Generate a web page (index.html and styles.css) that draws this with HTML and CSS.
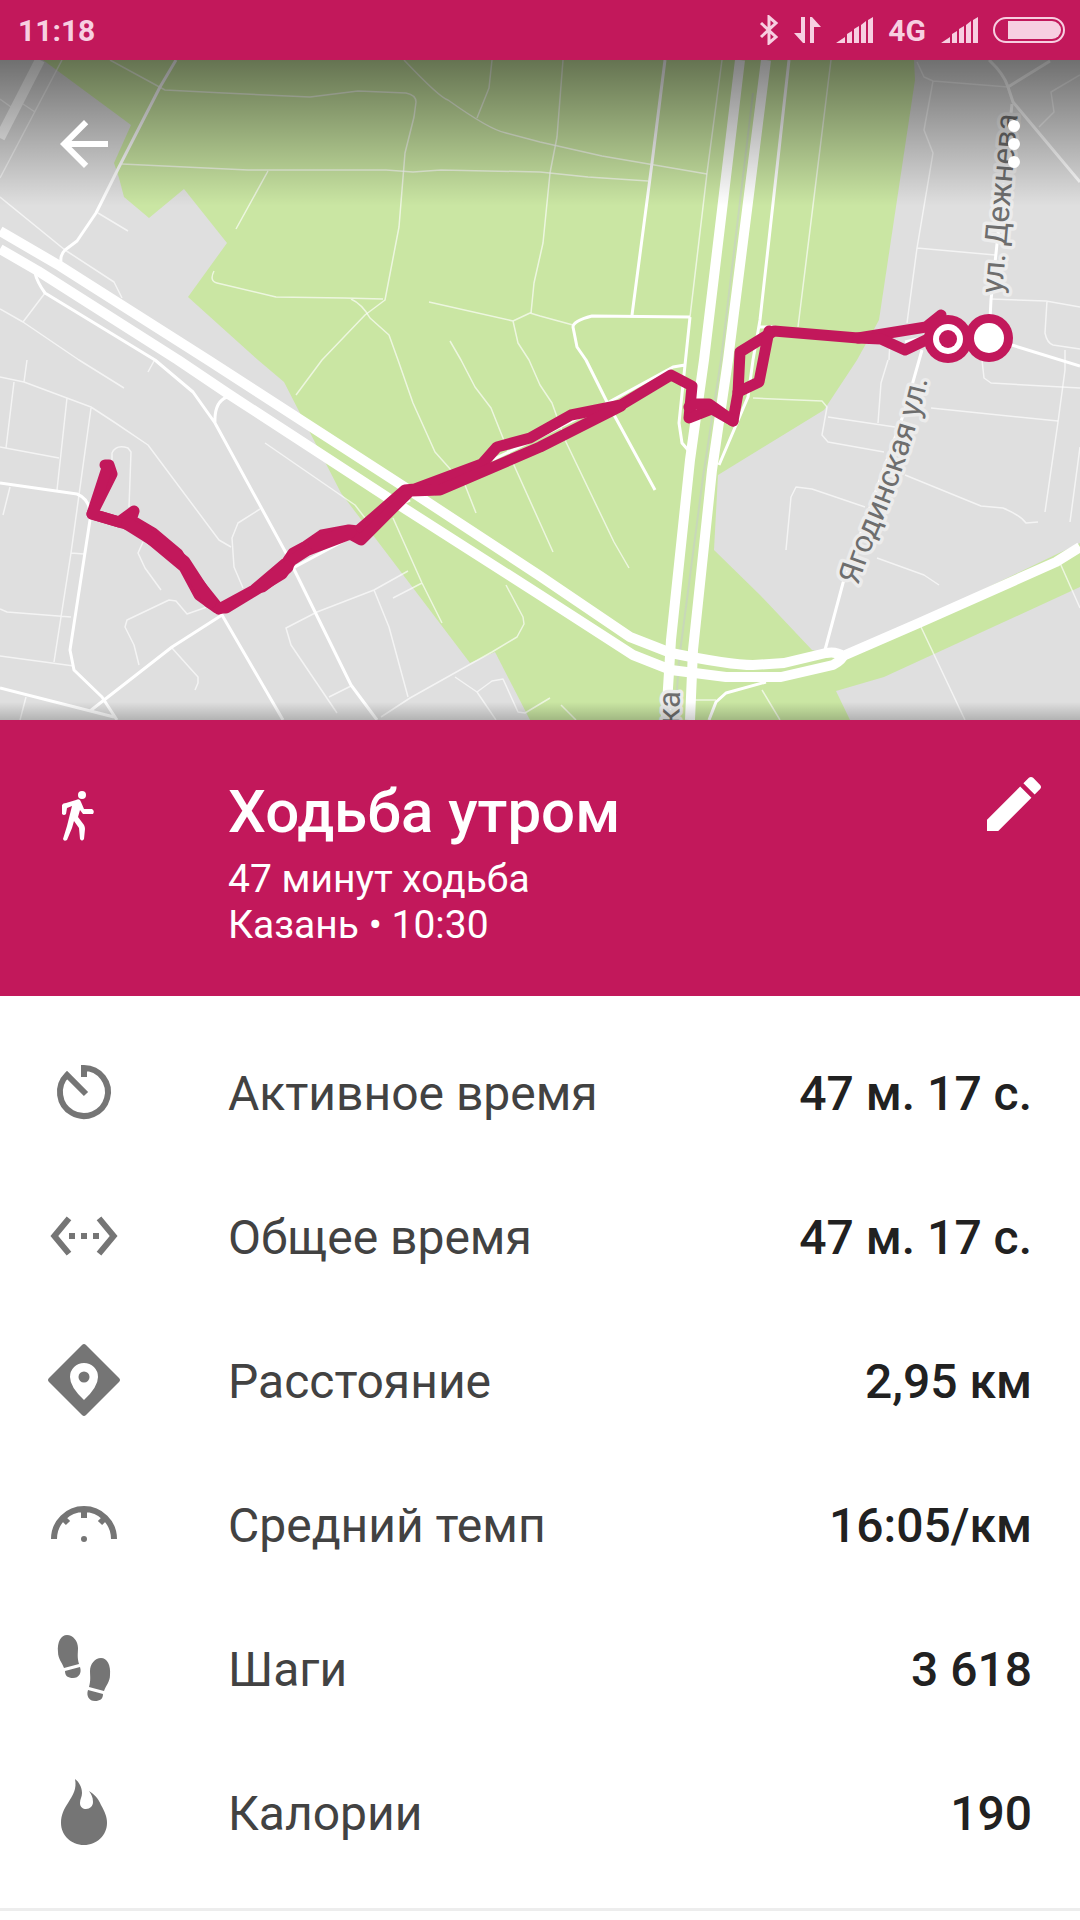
FILE: index.html
```html
<!DOCTYPE html>
<html lang="ru">
<head>
	<meta charset="UTF-8">
	<meta name="viewport" content="width=device-width, initial-scale=1">
	<title>Ходьба утром</title>
	<link rel="stylesheet" href="styles.css">
</head>
<body>
	<div class="status">
		<span class="status-text">11:18</span>
		<div class="status-icons">
			<svg width="20" height="30" viewBox="0 0 20 30"><path d="M2 8l15 14-7 6V2l7 6L2 22" fill="none" stroke="currentColor" stroke-width="3"/></svg>
			<svg width="27" height="26" viewBox="0 0 27 26"><path d="M7 0h4v26H9L0 16h7zM16 26h4V10h7L18 0h-2z" fill="currentColor"/></svg>
			<svg width="37" height="26" viewBox="0 0 37 26"><path d="M0 26l9-6v6zM11 26v-9l5-3v12zM18 26V12l5-3v17zM25 26V8l5-4v22zM32 26V3l5-3v26z" fill="currentColor"/></svg>
			<span class="status-text">4G</span>
			<svg width="37" height="26" viewBox="0 0 37 26"><path d="M0 26l9-6v6zM11 26v-9l5-3v12zM18 26V12l5-3v17zM25 26V8l5-4v22zM32 26V3l5-3v26z" fill="currentColor"/></svg>
			<svg width="72" height="26" viewBox="0 0 72 26"><rect x="1" y="1" width="70" height="24" rx="12" fill="none" stroke="currentColor" stroke-width="2"/><path d="M15 4h44a9 9 0 0 1 0 18H15z" fill="currentColor"/></svg>
		</div>
	</div>

	<div class="map">
		<svg class="map-canvas" viewBox="0 60 1080 660">
			<defs>
				<linearGradient id="shade" x1="0" y1="0" x2="0" y2="1">
					<stop offset="0" stop-opacity=".5"/>
					<stop offset="1" stop-opacity="0"/>
				</linearGradient>
				<linearGradient id="shadeBottom" x1="0" y1="0" x2="0" y2="1">
					<stop offset="0" stop-opacity="0"/>
					<stop offset="1" stop-opacity=".2"/>
				</linearGradient>
				<path id="yagodinskaya" d="M858 586Q868 556 877 534Q900 480 911 443Q921 412 930 370"/>
			</defs>
			<rect class="land" y="60" width="1080" height="660"/>
			<path class="park" d="M43 60L131 125L114 163L119 178L124 197L149 218L184 189L227 243L188 297L258 360L284 382L341 493L470 663L495 652L530 720H850L836 691L884 677L1080 587V543L843 657L812 650L760 595L714 550L718 475L824 410L857 360L879 320L915 80L914 60Z"/>

			<!-- lanes -->
			<g class="lane">
				<path d="M62 60L0 178M0 99L11 107M23 104L35 112"/>
				<path d="M110 60L165 90L224 93L310 97L358 91L406 93Q416 95 416 102L414 117L405 153L399 227L385 300L365 315L322 360L296 395"/>
				<path d="M122 164L248 170H386L413 172L441 170L540 172L588 177L648 181M268 171L236 229"/>
				<path d="M404 60Q440 98 448 100Q490 130 506 133L540 142L602 156L707 174M492 60L489 88L477 118"/>
				<path d="M214 271Q209 281 217 283L276 297L344 298L383 299M351 299Q362 304 370 318L389 335L398 360L413 403L435 452L451 470L465 485L476 513"/>
				<path d="M429 302L513 321L530 313L540 316L573 325M513 321L518 343L529 360L540 385L552 403L566 442L614 542L629 568"/>
				<path d="M450 341L461 360L475 387L491 408L513 463L540 523L553 552M563 60L557 137L550 173L543 243L534 283L531 313"/>
				<path d="M0 197L65 250L114 282L122 298M98 213L128 231M45 293L23 322L0 309M23 322L79 360L124 388"/>
				<path d="M0 377L24 382L91 407L114 422L148 445L219 540L231 547M27 360L24 382M14 382L6 448M67 398L57 490M0 447L59 458"/>
				<path d="M91 408L71 553L54 662M0 609L7 612L71 617M0 656L74 666M71 553L84 554M10 487L3 515M26 697L20 720"/>
				<path d="M112 463V453Q116 444 128 448L131 452L129 507M143 542L138 553L145 568L161 590"/>
				<path d="M207 607L187 614L176 601L169 600L127 620L125 627L134 645L139 665M172 648L198 677V683L195 690"/>
				<path d="M260 509L238 523L232 538L234 567L243 588M154 361L148 372M265 443L355 505L365 518"/>
				<path d="M408 571L374 590L317 612L286 628L291 645L337 713M374 590L389 627L408 697M329 697L351 686"/>
				<path d="M393 518L422 583L442 623M422 583L393 598M381 717L410 698L492 652L517 637L524 624L523 617L506 585"/>
				<path d="M455 677L477 692L496 720M477 692L492 681L503 679L518 712L525 713L550 698M561 705L576 720"/>
				<path d="M722 60L707 173L690 317M831 60L798 327M753 398L822 401L827 407L822 435L828 442L884 452"/>
				<path d="M917 62L924 77L933 81L1008 87M933 81L924 130L933 153L917 248L907 323M917 248L995 255"/>
				<path d="M1080 75L1051 92L1054 112L1039 127M991 299L1046 301L1080 307M1047 301L1045 333Q1047 343 1053 345L1080 349M1065 350V370L1058 422L1045 512"/>
				<path d="M982 360L984 378L991 383L1080 388M888 360L881 383L878 423M828 417L895 427M931 408L1058 421M889 360L890 340"/>
				<path d="M905 475L981 506L1003 508Q1020 515 1026 523L1038 522M865 507L812 489L796 487L791 497L786 550M877 558L924 575L939 585"/>
				<path d="M1080 447L1070 522M1060 563L1080 608M921 627L965 720M762 690L780 720M695 700H716"/>
			</g>

			<!-- streets -->
			<g class="street">
				<path d="M176 60L160 87L119 167L96 213L77 241L65 250Q60 255 61 262"/>
				<path d="M35 273Q37 282 45 293L155 360L193 392L215 423L286 553L351 685L377 720M227 397Q214 402 215 423"/>
				<path d="M0 483L77 494Q92 500 90 520L70 650L74 670L102 697L117 720M0 688L114 717M90 711L172 647L222 615L283 720M293 568L351 537"/>
				<path d="M665 60L652 163L632 315M690 317L592 316Q573 321 573 327L577 347L586 360L607 402L655 490"/>
				<path d="M690 317L685 365L679 423L682 443L688 450M685 365L673 367L609 402L574 420L540 437L492 460M405 492L435 494M394 508L410 500"/>
				<path d="M789 60L760 320L753 360L748 397L719 465M989 60Q1004 74 1008 87L1013 102L1080 182M1008 87L1050 61M760 327H775"/>
				<path d="M1012 104L991 300L989 338L1080 366M922 350L905 410L843 583L825 650M766 682L726 693L716 702L709 720M905 342L930 336"/>
			</g>

			<!-- highways -->
			<path class="railway" d="M753 93L721 360L703 477L679 660L677 690"/>
			<g class="highway">
				<path d="M40 60L0 138"/>
				<path d="M740 60L704 360L690 460L671 640L666 720M766 60L728 360L712 470L693 650L690 720"/>
				<path d="M0 231L60 266L208 360L406 488L540 576L630 637L671 653Q730 665 753 665L784 663L826 653Q836 651 843 656L919 623L1056 562L1080 547"/>
				<path d="M0 249L38 271L178 360L227 393L396 503L540 595L633 655L671 670L726 677H781L833 665Q842 660 843 656"/>
			</g>

			<g class="map-label">
				<text transform="translate(1002 294) rotate(-85)">ул. Дежнева</text>
				<text><textPath href="#yagodinskaya">Ягодинская ул.</textPath></text>
				<text transform="translate(679 725) rotate(-88)">ка</text>
			</g>

			<!-- walked route, there and back -->
			<g class="route">
				<path d="M105 465L109 465L112 474L92 514L119 522L134 511L131 520L153 533L178 554L187 569L219 609L254 590L287 562L293 553L306 546L322 535L349 530L358 531L405 490L415 489L482 464L497 447L530 438L571 415L621 405L671 375L692 386L689 418L712 409L733 421L738 393L740 352L774 331L858 338L926 327L941 315"/>
				<path d="M107 468L92 514L119 522L136 527L184 567L199 595L217 608L226 608L282 574L291 561L308 550L350 534L361 540L410 491L440 490L540 447L621 406M689 407L695 404L709 404L733 421M738 392L759 382L769 331M858 338L881 339L905 350L926 340L948 327"/>
				<path class="route-core" d="M128 524L168 549L184 562L210 602M262 586L287 567M315 544L350 532"/>
			</g>
			<circle class="pin" cx="948" cy="339" r="24"/>
			<circle class="pin" cx="989" cy="338" r="24"/>
			<circle class="pin-inner" cx="948" cy="339" r="15"/>
			<circle class="pin" cx="948" cy="339" r="9"/>
			<circle class="pin-inner" cx="989" cy="338" r="15"/>

			<rect y="60" width="1080" height="146" fill="url(#shade)"/>
			<rect y="702" width="1080" height="18" fill="url(#shadeBottom)"/>
		</svg>
		<div class="toolbar">
			<button class="icon-btn" type="button" aria-label="Назад">
				<svg class="icon" viewBox="0 0 24 24"><path d="M20 11H7.83l5.59-5.59L12 4l-8 8 8 8 1.41-1.41L7.83 13H20v-2z"/></svg>
			</button>
			<button class="icon-btn" type="button" aria-label="Ещё">
				<svg class="icon" viewBox="0 0 24 24"><circle cx="12" cy="6" r="2"/><circle cx="12" cy="12" r="2"/><circle cx="12" cy="18" r="2"/></svg>
			</button>
		</div>
	</div>

	<header class="summary">
		<svg class="walker" viewBox="0 0 32 50">
			<circle cx="20" cy="4" r="4"/>
			<path d="M14 9Q18 7 19 11L22 18 30 18Q33 20 31 23L21 23 18 19 16 26 22 34Q23 36 23 38L22 48Q20 51 18 48L17 37 12 30 10 37 5 49Q2 51 1 48L5 35 10 15 5 17 4 23Q2 25 0 23L0 14Q1 12 4 12Z"/>
		</svg>
		<div class="summary-text">
			<h1>Ходьба утром</h1>
			<p>47 минут ходьба</p>
			<p>Казань • 10:30</p>
		</div>
		<button class="icon-btn" type="button" aria-label="Изменить">
			<svg class="icon" viewBox="0 0 24 24"><path d="M3 17.25V21h3.75L17.81 9.94l-3.75-3.75L3 17.25zM20.71 7.04c.39-.39.39-1.02 0-1.41l-2.34-2.34c-.39-.39-1.02-.39-1.41 0l-1.83 1.83 3.75 3.75 1.83-1.83z"/></svg>
		</button>
	</header>

	<dl class="stats">
		<div class="stat">
			<dt>
				<svg class="icon" viewBox="0 0 72 72"><path class="line" d="M36 21V12a24 24 0 1 1-17 7l19 19"/></svg>
				<span class="stat-text">Активное время</span>
			</dt>
			<dd class="stat-text">47 м. 17 с.</dd>
		</div>
		<div class="stat">
			<dt>
				<svg class="icon" viewBox="0 0 24 24"><path d="M7.77 6.76L6.23 5.48.82 12l5.41 6.52 1.54-1.28L3.42 12l4.35-5.24zM7 13h2v-2H7v2zm10-2h-2v2h2v-2zm-6 2h2v-2h-2v2zm6.77-7.52l-1.54 1.28L20.58 12l-4.35 5.24 1.54 1.28L23.18 12l-5.41-6.52z"/></svg>
				<span class="stat-text">Общее время</span>
			</dt>
			<dd class="stat-text">47 м. 17 с.</dd>
		</div>
		<div class="stat">
			<dt>
				<svg class="icon" viewBox="0 0 72 72"><path fill-rule="evenodd" d="M34 1q2-2 4 0l33 33q2 2 0 4L38 71q-2 2-4 0L1 38q-2-2 0-4zM36 19a14 14 0 0 0-14 14q0 10 14 23 14-13 14-23a14 14 0 0 0-14-14z"/><circle cx="36" cy="33" r="5.5"/></svg>
				<span class="stat-text">Расстояние</span>
			</dt>
			<dd class="stat-text">2,95 км</dd>
		</div>
		<div class="stat">
			<dt>
				<svg class="icon" viewBox="0 0 72 72"><path class="line" d="M6 51a30 30 0 0 1 60 0M36 20v10M14 29l6 6M58 29l-6 6"/><circle cx="36" cy="51" r="3"/></svg>
				<span class="stat-text">Средний темп</span>
			</dt>
			<dd class="stat-text">16:05/км</dd>
		</div>
		<div class="stat">
			<dt>
				<svg class="icon" viewBox="0 0 72 72">
					<path d="M19 3C13 3 9 10 10 20C10 27 14 30 16 36L31 32C29 25 30 21 30 16C30 9 25 3 19 3ZM17 39L32 35C34 41 31 46 25 46C20 46 17 44 17 39Z"/>
					<path d="M53 26C59 26 63 33 62 43C62 50 58 53 56 59L41 55C43 48 42 44 42 39C42 32 47 26 53 26ZM55 62L40 58C38 64 41 69 47 69C52 69 55 67 55 62Z"/>
				</svg>
				<span class="stat-text">Шаги</span>
			</dt>
			<dd class="stat-text">3 618</dd>
		</div>
		<div class="stat">
			<dt>
				<svg class="icon" viewBox="0 0 72 72"><path d="M27 3C31 6 34 11 34 17C34 21 32 23 32 27C32 31 35 33 38 33C42 33 45 30 45 26C45 21 43 18 41 15C46 18 50 22 53 29C57 36 59 41 59 47C59 59 49 69 36 69C23 69 13 59 13 47C13 39 16 33 20 27C25 19 29 13 27 3Z"/></svg>
				<span class="stat-text">Калории</span>
			</dt>
			<dd class="stat-text">190</dd>
		</div>
	</dl>
</body>
</html>
```

FILE: styles.css
```css
* {
	box-sizing: border-box;
}
html,body {
	margin: 0;
	padding: 0;
	font-family: Roboto, "Noto Sans", sans-serif;
	background: #fff;
	color: #212121;
}
svg {
	display: block;
}

.status {
	display: flex;
	justify-content: space-between;
	align-items: center;
	height: 60px;
	padding: 0 15px 0 18px;
	background: #c2185b;
	color: #f7cfe1;
}
.status-text {
	padding-top: 2px;
	font-size: 30px;
	line-height: 36px;
	font-weight: 700;
}
.status-icons {
	display: flex;
	align-items: center;
	gap: 15px;
}

/* map */
.map {
	position: relative;
}
.map-canvas {
	width: 100%;
	height: auto;
}
.land { fill: #dfdfdf; }
.park { fill: #cae6a3; }
.lane,
.street,
.highway,
.railway,
.route {
	fill: none;
	stroke: #fff;
	stroke-linejoin: round;
}
.lane {
	stroke-width: 1.5;
	stroke-opacity: .65;
}
.street { stroke-width: 3; }
.highway { stroke-width: 10; }
.railway {
	stroke: #c8d8b8;
	stroke-width: 2;
}
.route {
	stroke: #c2185b;
	stroke-width: 11;
	stroke-linecap: round;
}
.route-core { stroke-width: 13; }
.pin { fill: #c2185b; }
.pin-inner { fill: #fff; }
.map-label {
	font-size: 31px;
	fill: #6e6e6e;
	stroke: #ececec;
	stroke-width: 7px;
	stroke-linejoin: round;
	paint-order: stroke;
}
.toolbar {
	position: absolute;
	top: 48px;
	left: 48px;
	right: 30px;
	display: flex;
	justify-content: space-between;
}
.icon {
	width: 72px;
	height: 72px;
	fill: currentColor;
}
.icon-btn {
	padding: 0;
	border: 0;
	background: none;
	color: #fff;
	cursor: pointer;
}

/* activity header */
.summary {
	display: grid;
	grid-template-columns: 180px 1fr auto;
	align-items: start;
	padding: 48px 30px 48px 48px;
	background: #c2185b;
	color: #fff;
}
.walker {
	width: 32px;
	height: 50px;
	margin: 23px 14px;
	fill: #fff;
}
.summary-text {
	padding-top: 8px;
}
.summary h1 {
	margin: 0;
	padding-bottom: 8px;
	font-size: 60px;
	line-height: 72px;
	font-weight: 500;
}
.summary p {
	margin: 0;
	font-size: 39px;
	line-height: 46px;
}

/* stats */
.stats {
	margin: 0;
	padding: 24px 48px;
	border-bottom: 3px solid #ededed;
}
.stat {
	display: flex;
	justify-content: space-between;
	align-items: center;
	height: 144px;
	font-size: 48px;
	line-height: 56px;
}
.stat dt {
	display: flex;
	align-items: center;
	gap: 108px;
	color: #424242;
}
.stat dd {
	margin: 0;
	font-weight: 500;
}
.stat-text {
	padding-top: 4px;
}
.stat .icon {
	fill: #757575;
}
.stat .line {
	fill: none;
	stroke: #757575;
	stroke-width: 6;
}
```
